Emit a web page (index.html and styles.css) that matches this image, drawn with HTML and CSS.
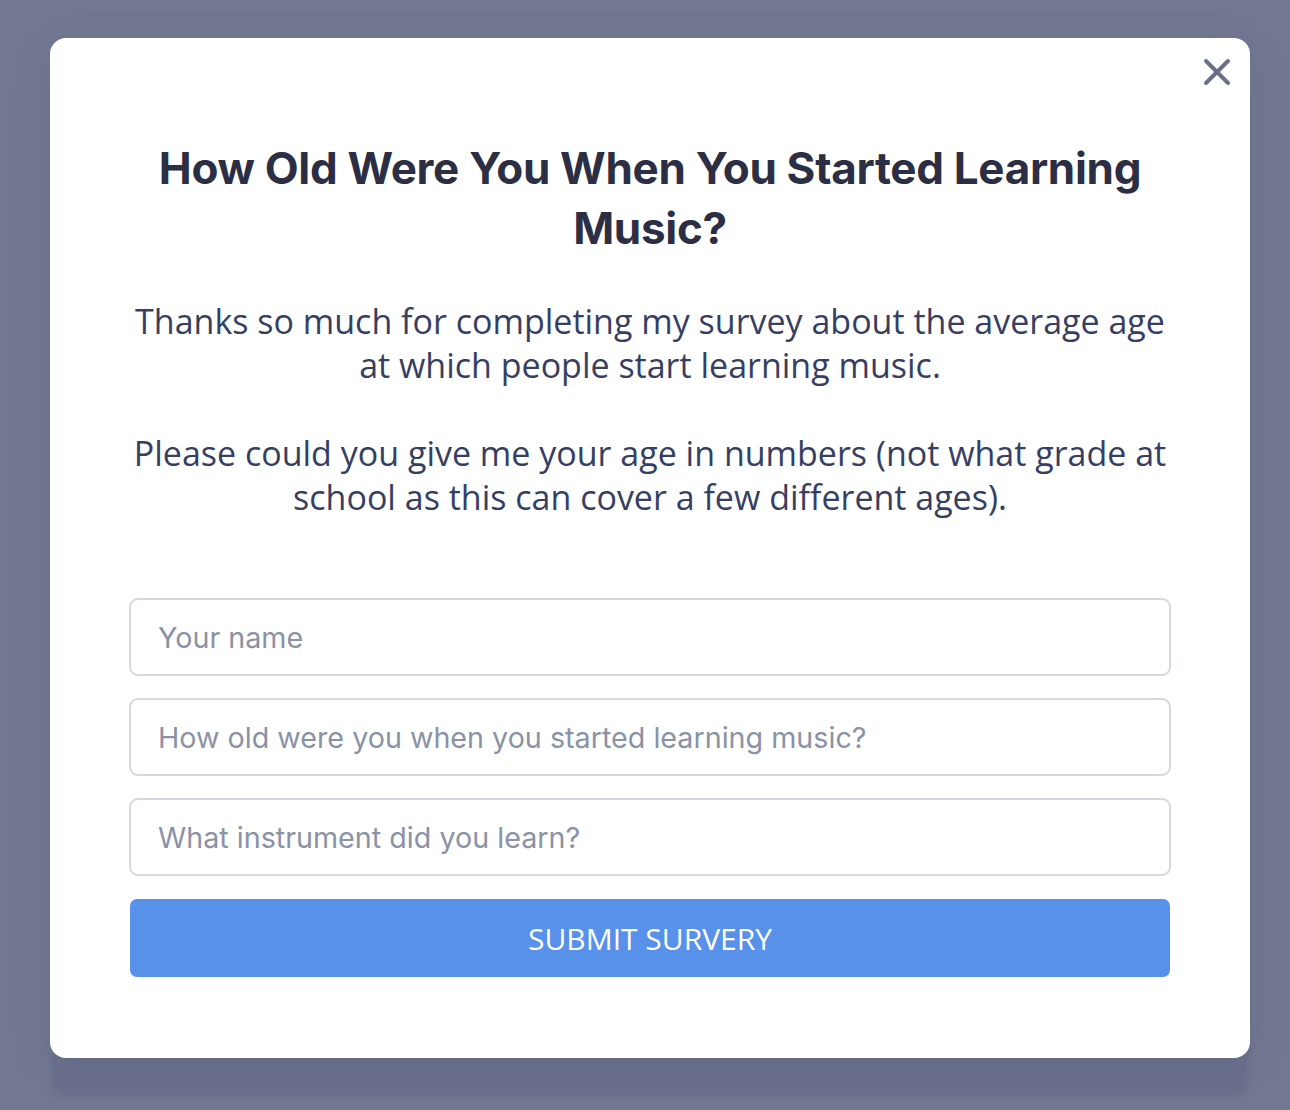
FILE: index.html
```html
<!DOCTYPE html>
<html lang="en">
<head>
    <meta charset="UTF-8">
    <meta name="viewport" content="width=device-width, initial-scale=1.0">
    <title>Music Survey</title>
    <link rel="stylesheet" href="styles.css">
</head>
<body>
    <section class="modal">
        <button class="close" aria-label="Close">
            <svg width="28" height="28" viewBox="0 0 28 28">
                <path d="M3 3 L25 25 M25 3 L3 25" stroke="#6b7089" stroke-width="4" stroke-linecap="round" fill="none"/>
            </svg>
        </button>
        <h1 class="title">How Old Were You When You Started Learning Music?</h1>
        <p class="intro">Thanks so much for completing my survey about the average age at which people start learning music.</p>
        <p class="intro">Please could you give me your age in numbers (not what grade at school as this can cover a few different ages).</p>

        <form class="survey">
            <input type="text" placeholder="Your name">
            <input type="text" placeholder="How old were you when you started learning music?">
            <input type="text" placeholder="What instrument did you learn?">
            <button type="button" class="submit">Submit Survery</button>
        </form>
    </section>
</body>
</html>
```

FILE: styles.css
```css
body {
    margin: 0;
    min-height: 1110px;
    background-color: #737892;
    font-family: "Open Sans", sans-serif;
    padding: 38px 0 0 50px;
    box-sizing: border-box;
}

.modal {
    position: relative;
    width: 1200px;
    box-sizing: border-box;
    background: #fff;
    border-radius: 16px;
    padding: 100px 79px 81px;
    box-shadow: 0 40px 4px -2px rgba(95, 101, 130, 0.45), 0 10px 40px rgba(40, 45, 70, 0.1);
}

.close {
    position: absolute;
    top: 20px;
    right: 19px;
    background: none;
    border: none;
    padding: 0;
    cursor: pointer;
}

.title {
    font-family: Inter, sans-serif;
    font-weight: 700;
    font-size: 44px;
    line-height: 60px;
    letter-spacing: -0.3px;
    color: #2c2f44;
    text-align: center;
    margin: 0 0 41px;
}

.intro {
    font-size: 34px;
    line-height: 44px;
    color: #363f63;
    text-align: center;
    margin: 0 -5px 44px;
}

.survey {
    display: flex;
    flex-direction: column;
    gap: 22px;
    margin-top: 79px;
}

.survey input {
    height: 78px;
    box-sizing: border-box;
    border: 2px solid #d5d8df;
    border-radius: 9px;
    padding: 0 27px;
    font-family: Inter, sans-serif;
    font-size: 28.7px;
    color: #2c2f44;
    outline: none;
}

.survey input::placeholder {
    color: #8a92a6;
}

.submit {
    height: 78px;
    margin: 1px 1px 0;
    border: none;
    border-radius: 7px;
    background-color: #5891ea;
    color: #fff;
    font-family: "Open Sans", sans-serif;
    font-size: 30px;
    font-weight: 500;
    text-transform: uppercase;
    cursor: pointer;
}
```
